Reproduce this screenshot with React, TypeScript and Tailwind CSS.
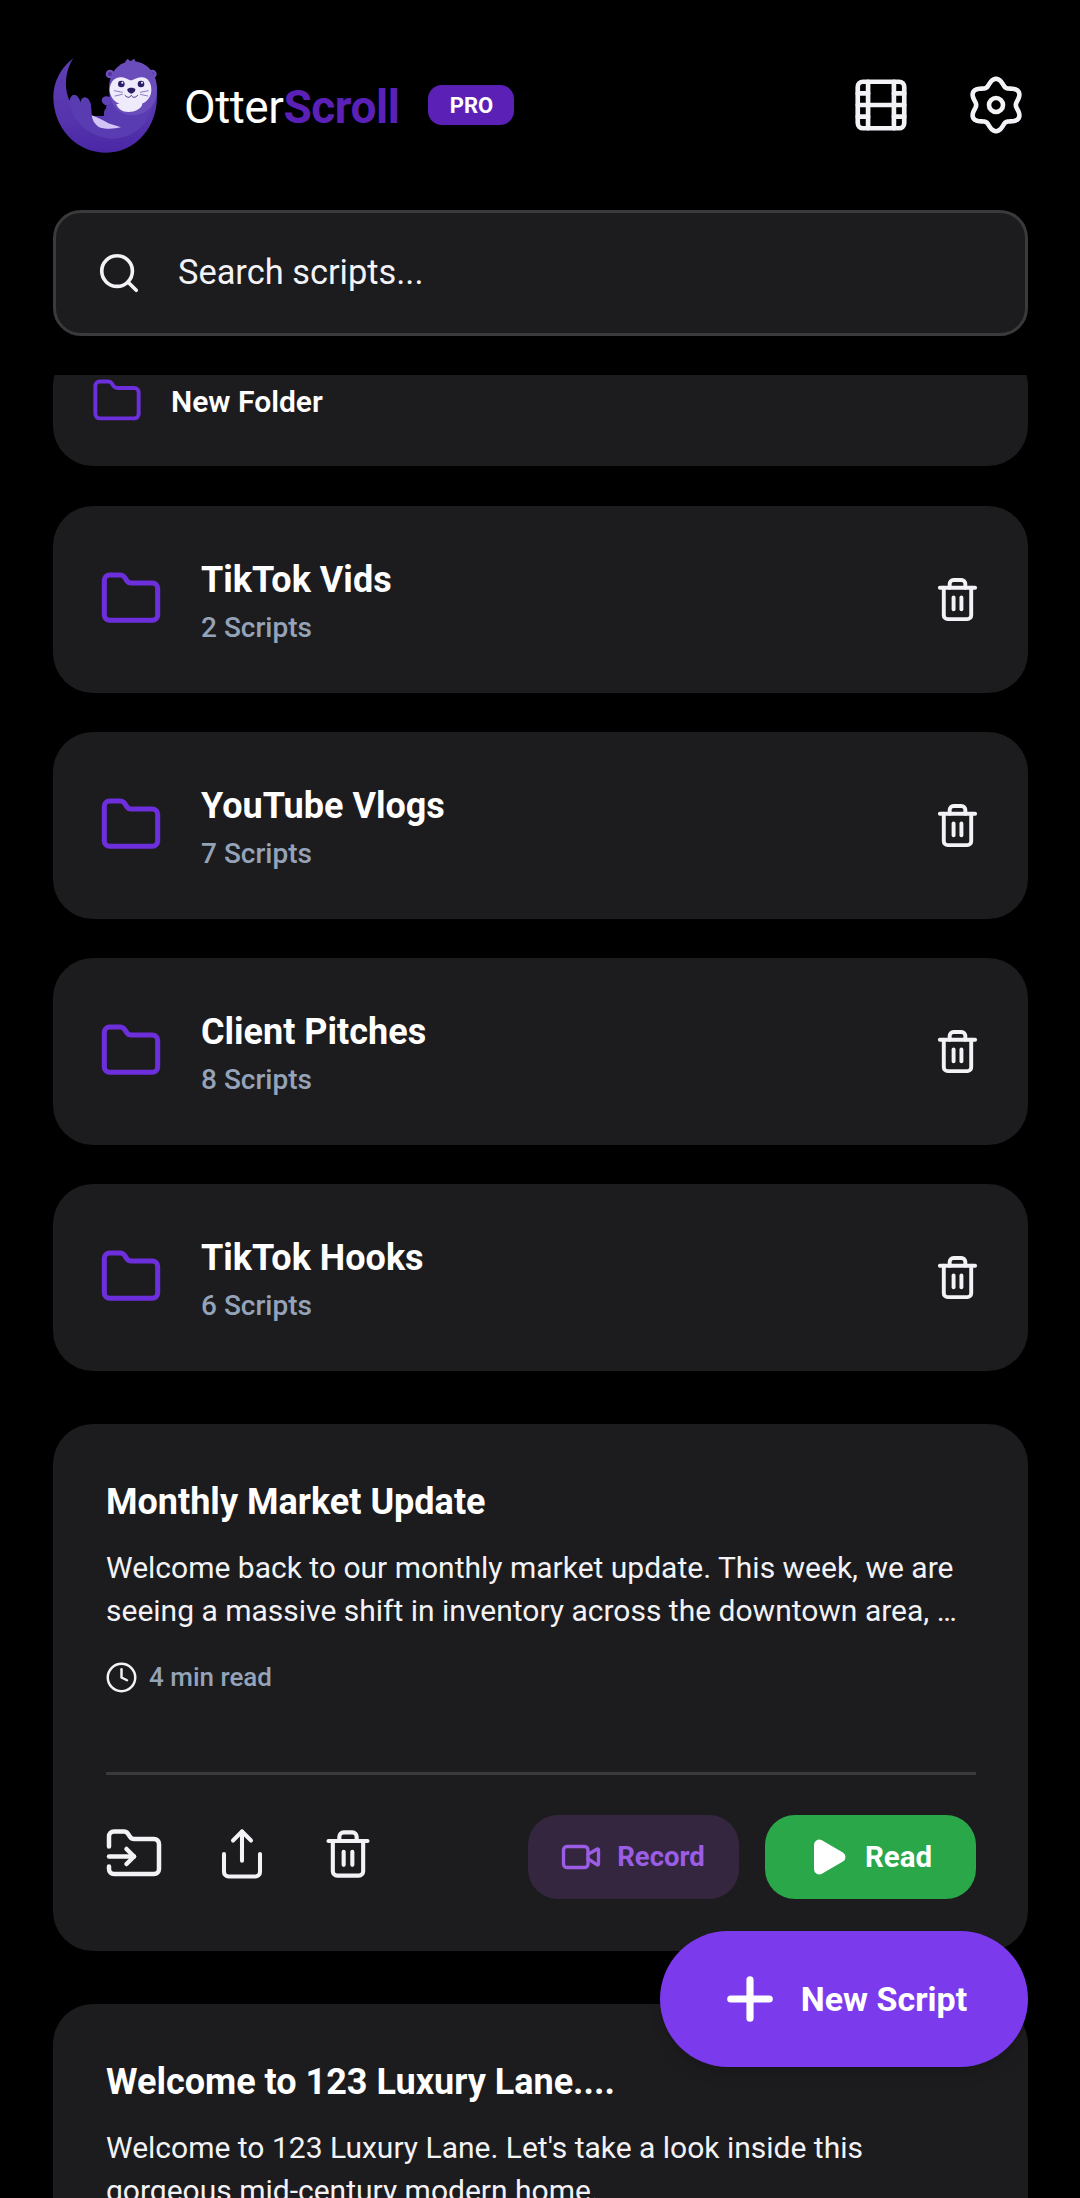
import { Clock, Film, Folder, FolderInput, Play, Plus, Search, Share, Trash2, Video } from "lucide-react";

const folders = [
  { name: "TikTok Vids", count: 2 },
  { name: "YouTube Vlogs", count: 7 },
  { name: "Client Pitches", count: 8 },
  { name: "TikTok Hooks", count: 6 },
];

// Smooth six-lobed cog; the lucide one has straighter teeth than the picture.
const cogPoints = Array.from({ length: 180 }, (_, i) => {
  const angle = (i / 180) * Math.PI * 2;
  const radius = 23 + 3.2 * Math.cos(6 * angle);
  return `${(32 + radius * Math.sin(angle)).toFixed(2)},${(32 - radius * Math.cos(angle)).toFixed(2)}`;
}).join(" ");

function CogIcon() {
  return (
    <svg viewBox="0 0 64 64" className="h-[64px] w-[64px] shrink-0 text-[#f2f2f7]" fill="none" stroke="currentColor" strokeWidth="4.6">
      <polygon points={cogPoints} strokeLinejoin="round" />
      <circle cx="32" cy="32" r="7" />
    </svg>
  );
}

// Logo drawing, coordinates taken from a 3x crop of the mark (120x110 box).
function OtterLogo({ className, id }: { className: string; id: string }) {
  return (
    <svg viewBox="0 0 360 330" className={className}>
      <defs>
        <linearGradient id={id} x1="0" y1="0" x2="0" y2="1">
          <stop offset="0" stopColor="#5f3fb5" />
          <stop offset="0.65" stopColor="#5534ad" />
          <stop offset="1" stopColor="#4a27a6" />
        </linearGradient>
      </defs>
      {/* tail and body */}
      <path
        d="M85 25C64 55 54 110 74 152C78 128 100 128 106 158C110 136 134 136 138 168L140 198L178 198L190 140L335 120C345 230 270 308 185 308C90 308 25 230 25 140C25 95 50 50 85 25Z"
        fill={`url(#${id})`}
      />
      <path d="M70 150C80 215 135 262 200 266C262 266 315 225 328 150L190 150L178 198L140 198L138 170C134 136 110 136 106 158C100 128 78 128 74 152Z" fill="#5a3cb2" />
      {/* belly */}
      <path d="M140 196C150 200 170 208 190 220L228 232C205 238 175 238 160 230C148 222 142 210 140 196Z" fill="#d2c5f5" />
      {/* arm */}
      <path d="M180 178C195 174 215 182 235 184L292 192C296 215 285 232 260 234C235 234 195 222 180 204C176 196 176 186 180 178Z" fill="#5a3cb2" />
      {/* ears and head */}
      <circle cx="195" cy="72" r="13" fill="#6f52bd" />
      <circle cx="322" cy="72" r="13" fill="#6f52bd" />
      <circle cx="195" cy="72" r="6" fill="#4c2fa0" />
      <circle cx="322" cy="72" r="6" fill="#4c2fa0" />
      <path d="M240 36L248 26L256 34L268 26L272 36L262 50L245 48Z" fill="#6a4dbb" />
      <path d="M192 115C192 68 222 34 262 34C304 34 336 68 336 118C336 165 305 195 262 196C222 195 192 165 192 115Z" fill="#6a4dbb" />
      {/* chest and face */}
      <path d="M214 162L292 162C290 176 270 186 250 186C232 186 218 176 214 162Z" fill="#efeafc" />
      <path d="M194 122C194 95 210 80 230 82C245 84 252 91 258 91C264 91 272 84 288 82C306 80 320 96 319 122C318 150 292 168 256 168C222 168 196 150 194 122Z" fill="#efeafc" />
      <circle cx="229" cy="102" r="10" fill="#2b1c68" />
      <circle cx="288" cy="102" r="10" fill="#2b1c68" />
      <circle cx="232" cy="98" r="3" fill="#ffffff" />
      <circle cx="291" cy="98" r="3" fill="#ffffff" />
      <path d="M247 118C251 112 267 112 271 118C272 125 263 131 259 131C255 131 246 125 247 118Z" fill="#2b1c68" />
      <path d="M240 136C248 145 255 143 259 136C263 143 270 145 278 136" fill="none" stroke="#2b1c68" strokeWidth="2.6" strokeLinecap="round" />
      <path d="M208 122L232 127M210 138L232 133M286 127L310 122M286 133L308 138" fill="none" stroke="#6a55a8" strokeWidth="2.2" strokeLinecap="round" />
      {/* paw */}
      <path d="M170 150C172 138 186 136 194 142C200 150 198 160 190 166C180 168 170 160 170 150Z" fill="#5f42b6" />
    </svg>
  );
}

function FolderCard({ name, count }: { name: string; count: number }) {
  return (
    <div className="flex h-[186.5px] items-center rounded-[40px] bg-[#1c1c1e] pr-[47px] pl-[46px]">
      <Folder size={64} strokeWidth={1.9} className="shrink-0 text-[#6d2fdc]" />
      <div className="ml-[38px] min-w-0 flex-1 pt-[5px]">
        <p className="text-[36px] leading-[48px] font-bold text-white">{name}</p>
        <p className="mt-[4px] text-[28px] leading-[40px] font-medium text-[#94a3b8]">{count} Scripts</p>
      </div>
      <Trash2 size={47} strokeWidth={2} className="shrink-0 text-[#f2f2f7]" />
    </div>
  );
}

function ScriptCard({ title, body, minutes }: { title: string; body: string; minutes?: number }) {
  return (
    <div className="rounded-[40px] bg-[#1c1c1e] pt-[56px] pr-[52px] pb-[52px] pl-[53px]">
      <p className="text-[36px] leading-[44px] font-bold text-white">{title}</p>
      <p className="mt-[22px] text-[30px] leading-[43px] text-[#f2f2f7]">{body}</p>
      {minutes ? (
        <>
          <div className="mt-[30px] flex h-[30px] items-center">
            <Clock size={33} strokeWidth={1.8} className="-ml-[1px] shrink-0 text-[#f2f2f7]" />
            <span className="ml-[11px] text-[26px] font-medium text-[#94a3b8]">{minutes} min read</span>
          </div>
          <div className="mt-[80px] h-[3px] bg-[#3a3a3c]" />
          <div className="mt-[40px] flex items-center">
            <div className="mb-[6px] flex items-center">
              <FolderInput size={60} strokeWidth={1.8} className="-ml-[2px] shrink-0 text-[#f2f2f7]" />
              <Share size={54} strokeWidth={1.8} className="ml-[51px] shrink-0 text-[#f2f2f7]" />
              <Trash2 size={52} strokeWidth={1.9} className="ml-[53px] shrink-0 text-[#f2f2f7]" />
            </div>
            <div className="ml-auto flex gap-[26px]">
              <button className="flex h-[84px] w-[211px] items-center justify-center gap-[15px] rounded-[30px] bg-[#35263f] pr-[2px] text-[27.5px] font-bold text-[#9b5de5]">
                <Video size={42} strokeWidth={1.9} />
                Record
              </button>
              <button className="flex h-[84px] w-[211px] items-center justify-center gap-[16px] rounded-[30px] bg-[#2aa748] pr-[2px] text-[29.5px] font-bold text-white">
                <Play size={42} strokeWidth={2} fill="currentColor" />
                Read
              </button>
            </div>
          </div>
        </>
      ) : null}
    </div>
  );
}

export default function App() {
  return (
    <div className="relative flex h-[2198px] w-[1080px] flex-col overflow-hidden bg-black font-[Roboto,sans-serif]">
      <header className="flex h-[210px] shrink-0 items-start pt-[57px] pr-[52px] pl-[53px]">
        <OtterLogo id="otterBody" className="-mt-[7px] -ml-[8px] h-[110px] w-[120px] shrink-0" />
        <h1 className="mt-[22px] ml-[19px] text-[46px] leading-[56px] tracking-[-0.01em] text-white">
          Otter<span className="font-bold text-[#5b21b6]">Scroll</span>
        </h1>
        <span className="mt-[28px] ml-[29px] flex h-[40px] w-[86px] items-center justify-center rounded-[14px] bg-[#5b21b6] text-[22px] font-bold text-white">
          PRO
        </span>
        <div className="mt-[16px] ml-auto flex items-center gap-[52px]">
          <Film size={62} strokeWidth={1.8} className="text-[#f2f2f7]" />
          <CogIcon />
        </div>
      </header>

      <div className="mr-[52px] ml-[53px] flex h-[126px] shrink-0 items-center rounded-[28px] border-[3px] border-[#3a3a3c] bg-[#1c1c1e] pl-[40px]">
        <Search size={46} strokeWidth={1.9} className="shrink-0 text-[#f2f2f7]" />
        <span className="ml-[36px] text-[34.4px] text-[#f2f2f7]">Search scripts...</span>
      </div>

      <main className="mt-[39px] min-h-0 flex-1 overflow-hidden pr-[52px] pl-[53px]">
        <div className="-mt-[29px] flex h-[120px] items-center rounded-[40px] bg-[#1c1c1e] pb-[10px] pl-[38px]">
          <Folder size={52} strokeWidth={1.8} className="shrink-0 text-[#6d2fdc]" />
          <span className="ml-[28px] text-[30px] font-semibold text-white">New Folder</span>
        </div>
        <div className="mt-[40px] flex flex-col gap-[39.5px]">
          {folders.map((folder) => (
            <FolderCard key={folder.name} name={folder.name} count={folder.count} />
          ))}
        </div>
        <div className="mt-[53.5px] flex flex-col gap-[53px]">
          <ScriptCard
            title="Monthly Market Update"
            body="Welcome back to our monthly market update. This week, we are seeing a massive shift in inventory across the downtown area, …"
            minutes={4}
          />
          <ScriptCard
            title="Welcome to 123 Luxury Lane...."
            body="Welcome to 123 Luxury Lane. Let's take a look inside this gorgeous mid-century modern home."
          />
        </div>
      </main>

      <button className="absolute top-[1931px] left-[660px] flex h-[136px] w-[368px] items-center justify-center gap-[18px] rounded-full bg-[#7c3aed] pr-[4px] text-[34px] font-bold text-white shadow-lg">
        <Plus size={66} strokeWidth={2.6} />
        New Script
      </button>
    </div>
  );
}
